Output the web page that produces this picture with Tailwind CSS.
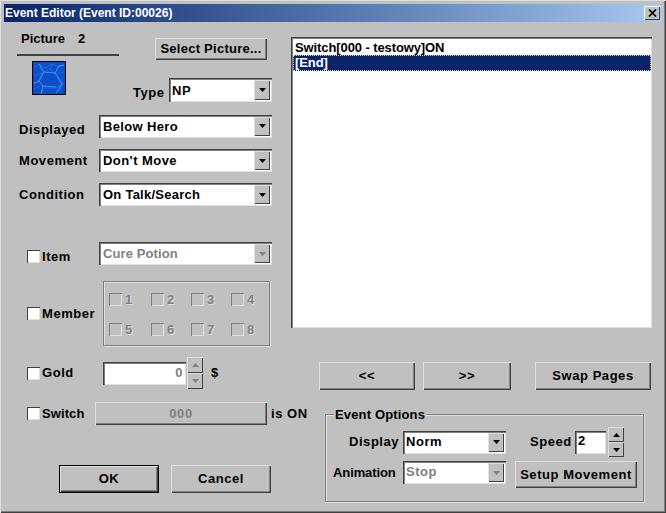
<!DOCTYPE html>
<html lang="en">
<head>
  <meta charset="UTF-8" />
  <title>Event Editor</title>
  <script src="https://cdn.jsdelivr.net/npm/@tailwindcss/browser@4"></script>
</head>
<body class="bg-[#c0c0c0]">
<div class="w-[666px] h-[513px] overflow-hidden flex flex-col px-[4px] pt-[4px] bg-[#c0c0c0] text-black font-['Liberation_Sans',sans-serif] font-bold text-[13px] leading-[16px] tracking-[0.55px] whitespace-nowrap shadow-[inset_1px_1px_0_#dfdfdf,inset_-1px_-1px_0_#404040,inset_-2px_-2px_0_#808080]">

  <!-- Title bar -->
  <div class="h-[18px] shrink-0 flex items-center justify-between pl-[1px] pr-[2px] bg-gradient-to-r from-[#0a246a] to-[#a6caf0] text-white text-[12px] tracking-normal">
    <span>Event Editor (Event ID:00026)</span>
    <div class="w-[16px] h-[14px] flex items-center justify-center bg-[#c0c0c0] shadow-[inset_1px_1px_0_#fff,inset_-1px_-1px_0_#404040]">
      <svg width="9" height="8" viewBox="0 0 9 8"><path d="M1 0.500L8 7.500M8 0.500L1 7.500" fill="none" stroke="#000" stroke-width="1.700"/></svg>
    </div>
  </div>

  <div class="flex flex-1">
    <!-- Left column -->
    <div class="w-[287px] shrink-0 flex flex-col">
      <div class="flex ml-[13px] w-[255px]">
        <div class="w-[102px] pt-[9px]">
          <div class="pl-[4px] h-[16px] tracking-normal">Picture<span class="ml-[13px]">2</span></div>
          <div class="h-[2px] mt-[7px] bg-[#404040]"></div>
          <svg class="ml-[15px] mt-[5px]" width="34" height="34" viewBox="0 0 34 34">
            <rect x="0.500" y="0.500" width="33" height="33" fill="#0a4fc8" stroke="#000"/>
            <path d="M2 6l6-3 5 4 8-4 6 3 5-2M8 3l2 9-8 3M10 12l8-4 6 5 8-2M24 13l7 9-4 9M18 8l3-5M10 12l-3 8-5 3M7 20l6 7 11 0 3 4M13 27l-3 5M24 27l7-5M2 28l6-3" fill="none" stroke="#1f6ae0" stroke-width="1"/>
            <path d="M7 3l5 8-5 9-5 2M12 11l11 1 4-7 5-1M23 12l7 11-6 9M7 20l4 5 13 1M11 25l-2 8" fill="none" stroke="#4590f0" stroke-width="1"/>
          </svg>
        </div>
        <div class="flex-1 flex flex-col items-end">
          <div class="mt-[16px] mr-[5px] w-[112px] h-[22px] flex items-center justify-center tracking-[0.25px] bg-[#c0c0c0] shadow-[inset_1px_1px_0_#dfdfdf,inset_-1px_-1px_0_#404040,inset_-2px_-2px_0_#808080]">Select Picture...</div>
          <div class="mt-[18px] w-[139px] flex items-center">
            <span class="w-[36px] mt-[5px]">Type</span>
            <div class="w-[103px] h-[24px] flex justify-between pl-[3px] pt-[2px] pr-[2px] pb-[2px] bg-white shadow-[inset_1px_1px_0_#404040,inset_2px_2px_0_#808080,inset_-1px_-1px_0_#dfdfdf]">
              <span class="mt-[3px]">NP</span>
              <div class="w-[16px] flex items-center justify-center bg-[#c0c0c0] shadow-[inset_1px_1px_0_#dfdfdf,inset_-1px_-1px_0_#404040]"><svg width="7" height="4" viewBox="0 0 7 4"><path d="M0 0h7L3.500 4z" fill="#000"/></svg></div>
            </div>
          </div>
        </div>
      </div>

      <div class="mt-[12px] ml-[15px] flex items-center">
        <span class="w-[80px] mt-[8px]">Displayed</span>
        <div class="w-[173px] h-[23px] flex justify-between pl-[4px] pt-[2px] pr-[2px] pb-[2px] bg-white shadow-[inset_1px_1px_0_#404040,inset_2px_2px_0_#808080,inset_-1px_-1px_0_#dfdfdf]">
          <span class="mt-[2px] tracking-[0.35px]">Below Hero</span>
          <div class="w-[16px] flex items-center justify-center bg-[#c0c0c0] shadow-[inset_1px_1px_0_#dfdfdf,inset_-1px_-1px_0_#404040]"><svg width="7" height="4" viewBox="0 0 7 4"><path d="M0 0h7L3.500 4z" fill="#000"/></svg></div>
        </div>
      </div>
      <div class="mt-[11px] ml-[15px] flex items-center">
        <span class="w-[80px]">Movement</span>
        <div class="w-[173px] h-[23px] flex justify-between pl-[4px] pt-[2px] pr-[2px] pb-[2px] bg-white shadow-[inset_1px_1px_0_#404040,inset_2px_2px_0_#808080,inset_-1px_-1px_0_#dfdfdf]">
          <span class="mt-[2px] tracking-[0.45px]">Don't Move</span>
          <div class="w-[16px] flex items-center justify-center bg-[#c0c0c0] shadow-[inset_1px_1px_0_#dfdfdf,inset_-1px_-1px_0_#404040]"><svg width="7" height="4" viewBox="0 0 7 4"><path d="M0 0h7L3.500 4z" fill="#000"/></svg></div>
        </div>
      </div>
      <div class="mt-[11px] ml-[15px] flex items-center">
        <span class="w-[80px]">Condition</span>
        <div class="w-[173px] h-[23px] flex justify-between pl-[4px] pt-[2px] pr-[2px] pb-[2px] bg-white shadow-[inset_1px_1px_0_#404040,inset_2px_2px_0_#808080,inset_-1px_-1px_0_#dfdfdf]">
          <span class="mt-[2px] tracking-[0.25px]">On Talk/Search</span>
          <div class="w-[16px] flex items-center justify-center bg-[#c0c0c0] shadow-[inset_1px_1px_0_#dfdfdf,inset_-1px_-1px_0_#404040]"><svg width="7" height="4" viewBox="0 0 7 4"><path d="M0 0h7L3.500 4z" fill="#000"/></svg></div>
        </div>
      </div>

      <!-- Item -->
      <div class="mt-[36px] ml-[23px] flex items-center">
        <div class="w-[13px] h-[13px] shrink-0 mt-[6px] bg-white shadow-[inset_1px_1px_0_#404040,inset_-1px_-1px_0_#dfdfdf]"></div>
        <span class="w-[57px] ml-[2px] mt-[7px]">Item</span>
        <div class="w-[173px] h-[23px] flex justify-between pl-[4px] pt-[2px] pr-[2px] pb-[2px] bg-white text-[#808080] shadow-[inset_1px_1px_0_#404040,inset_2px_2px_0_#808080,inset_-1px_-1px_0_#dfdfdf]">
          <span class="mt-[2px] tracking-[0.1px]">Cure Potion</span>
          <div class="w-[16px] flex items-center justify-center bg-[#c0c0c0] shadow-[inset_1px_1px_0_#dfdfdf,inset_-1px_-1px_0_#404040]"><svg width="7" height="4" viewBox="0 0 7 4"><path d="M0 0h7L3.500 4z" fill="#808080"/></svg></div>
        </div>
      </div>

      <!-- Member -->
      <div class="mt-[16px] ml-[23px] flex items-center">
        <div class="w-[13px] h-[13px] shrink-0 bg-white shadow-[inset_1px_1px_0_#404040,inset_-1px_-1px_0_#dfdfdf]"></div>
        <span class="w-[61px] ml-[2px]">Member</span>
        <div class="w-[167px] h-[65px] pl-[5px] pt-[11px] border border-[#808080] shadow-[inset_1px_1px_0_#dfdfdf,1px_1px_0_#dfdfdf] text-[#808080] [text-shadow:1px_1px_0_#dfdfdf] grid grid-cols-[42px_40px_40px_40px] grid-rows-[30px_14px]">
          <div class="flex items-start"><div class="w-[13px] h-[13px] shadow-[inset_1px_1px_0_#808080,inset_-1px_-1px_0_#dfdfdf]"></div><span class="ml-[3px] leading-[14px]">1</span></div>
          <div class="flex items-start"><div class="w-[13px] h-[13px] shadow-[inset_1px_1px_0_#808080,inset_-1px_-1px_0_#dfdfdf]"></div><span class="ml-[3px] leading-[14px]">2</span></div>
          <div class="flex items-start"><div class="w-[13px] h-[13px] shadow-[inset_1px_1px_0_#808080,inset_-1px_-1px_0_#dfdfdf]"></div><span class="ml-[3px] leading-[14px]">3</span></div>
          <div class="flex items-start"><div class="w-[13px] h-[13px] shadow-[inset_1px_1px_0_#808080,inset_-1px_-1px_0_#dfdfdf]"></div><span class="ml-[3px] leading-[14px]">4</span></div>
          <div class="flex items-start"><div class="w-[13px] h-[13px] shadow-[inset_1px_1px_0_#808080,inset_-1px_-1px_0_#dfdfdf]"></div><span class="ml-[3px] leading-[14px]">5</span></div>
          <div class="flex items-start"><div class="w-[13px] h-[13px] shadow-[inset_1px_1px_0_#808080,inset_-1px_-1px_0_#dfdfdf]"></div><span class="ml-[3px] leading-[14px]">6</span></div>
          <div class="flex items-start"><div class="w-[13px] h-[13px] shadow-[inset_1px_1px_0_#808080,inset_-1px_-1px_0_#dfdfdf]"></div><span class="ml-[3px] leading-[14px]">7</span></div>
          <div class="flex items-start"><div class="w-[13px] h-[13px] shadow-[inset_1px_1px_0_#808080,inset_-1px_-1px_0_#dfdfdf]"></div><span class="ml-[3px] leading-[14px]">8</span></div>
        </div>
      </div>

      <!-- Gold -->
      <div class="mt-[11px] ml-[23px] flex items-center h-[32px]">
        <div class="w-[13px] h-[13px] shrink-0 bg-white shadow-[inset_1px_1px_0_#404040,inset_-1px_-1px_0_#dfdfdf]"></div>
        <span class="w-[61px] ml-[2px]">Gold</span>
        <div class="w-[83px] h-[23px] pr-[3px] text-right leading-[22px] bg-white text-[#808080] shadow-[inset_1px_1px_0_#404040,inset_2px_2px_0_#808080,inset_-1px_-1px_0_#dfdfdf]">0</div>
        <div class="ml-[1px] w-[16px] h-[32px] flex flex-col">
          <div class="h-[16px] flex items-center justify-center bg-[#c0c0c0] shadow-[inset_1px_1px_0_#dfdfdf,inset_-1px_-1px_0_#404040]"><svg width="7" height="4" viewBox="0 0 7 4"><path d="M0 4h7L3.500 0z" fill="#808080"/></svg></div>
          <div class="h-[16px] flex items-center justify-center bg-[#c0c0c0] shadow-[inset_1px_1px_0_#dfdfdf,inset_-1px_-1px_0_#404040]"><svg width="7" height="4" viewBox="0 0 7 4"><path d="M0 0h7L3.500 4z" fill="#808080"/></svg></div>
        </div>
        <span class="ml-[8px]">$</span>
      </div>

      <!-- Switch -->
      <div class="mt-[13px] ml-[23px] w-[300px] flex items-center">
        <div class="w-[13px] h-[13px] shrink-0 bg-white shadow-[inset_1px_1px_0_#404040,inset_-1px_-1px_0_#dfdfdf]"></div>
        <span class="w-[53px] shrink-0 ml-[2px] tracking-[0.1px]">Switch</span>
        <div class="w-[172px] h-[23px] shrink-0 flex items-center justify-center text-[#808080] shadow-[inset_1px_1px_0_#dfdfdf,inset_-1px_-1px_0_#404040,inset_-2px_-2px_0_#808080]">000</div>
        <span class="ml-[4px] shrink-0">is ON</span>
      </div>

      <!-- OK / Cancel -->
      <div class="mt-[40px] ml-[55px] flex gap-[12px]">
        <div class="w-[100px] h-[28px] flex items-center justify-center border border-black shadow-[inset_1px_1px_0_#dfdfdf,inset_-1px_-1px_0_#404040,inset_-2px_-2px_0_#808080]">OK</div>
        <div class="w-[100px] h-[28px] flex items-center justify-center shadow-[inset_1px_1px_0_#dfdfdf,inset_-1px_-1px_0_#404040,inset_-2px_-2px_0_#808080]">Cancel</div>
      </div>
    </div>

    <!-- Right column -->
    <div class="flex-1 flex flex-col">
      <!-- Command list -->
      <div class="mt-[15px] w-[361px] h-[291px] pt-[3px] pl-[2px] pr-[1px] bg-white tracking-[-0.1px] shadow-[inset_1px_1px_0_#404040,inset_2px_2px_0_#808080,inset_-1px_-1px_0_#dfdfdf]">
        <div class="h-[15px] pl-[2px] leading-[15px]">Switch[000 - testowy]ON</div>
        <div class="h-[16px] pl-[1px] leading-[14px] bg-[#0a246a] text-white border border-dotted border-[#e8d48a]">[End]</div>
      </div>

      <!-- Page buttons -->
      <div class="mt-[34px] ml-[28px] flex">
        <div class="w-[96px] h-[28px] flex items-center justify-center shadow-[inset_1px_1px_0_#dfdfdf,inset_-1px_-1px_0_#404040,inset_-2px_-2px_0_#808080]">&lt;&lt;</div>
        <div class="ml-[8px] w-[88px] h-[28px] flex items-center justify-center shadow-[inset_1px_1px_0_#dfdfdf,inset_-1px_-1px_0_#404040,inset_-2px_-2px_0_#808080]">&gt;&gt;</div>
        <div class="ml-[24px] w-[116px] h-[28px] flex items-center justify-center shadow-[inset_1px_1px_0_#dfdfdf,inset_-1px_-1px_0_#404040,inset_-2px_-2px_0_#808080]">Swap Pages</div>
      </div>

      <!-- Event Options -->
      <div class="relative mt-[24px] ml-[34px] w-[319px] h-[88px] border border-[#808080] shadow-[inset_1px_1px_0_#dfdfdf,1px_1px_0_#dfdfdf]">
        <span class="absolute left-[8px] top-[-8px] px-[1px] bg-[#c0c0c0] tracking-[0.15px]">Event Options</span>
        <div class="mt-[12px] ml-[23px] flex items-center h-[30px]">
          <span class="w-[54px]">Display</span>
          <div class="w-[103px] h-[23px] flex justify-between pl-[3px] pt-[2px] pr-[2px] pb-[2px] bg-white shadow-[inset_1px_1px_0_#404040,inset_2px_2px_0_#808080,inset_-1px_-1px_0_#dfdfdf]">
            <span class="mt-[1px]">Norm</span>
            <div class="w-[16px] flex items-center justify-center bg-[#c0c0c0] shadow-[inset_1px_1px_0_#dfdfdf,inset_-1px_-1px_0_#404040]"><svg width="7" height="4" viewBox="0 0 7 4"><path d="M0 0h7L3.500 4z" fill="#000"/></svg></div>
          </div>
          <span class="ml-[24px] w-[45px]">Speed</span>
          <div class="w-[31px] h-[23px] pl-[3px] leading-[20px] bg-white shadow-[inset_1px_1px_0_#404040,inset_2px_2px_0_#808080,inset_-1px_-1px_0_#dfdfdf]">2</div>
          <div class="ml-[2px] w-[16px] h-[30px] flex flex-col">
            <div class="h-[15px] flex items-center justify-center bg-[#c0c0c0] shadow-[inset_1px_1px_0_#dfdfdf,inset_-1px_-1px_0_#404040]"><svg width="7" height="4" viewBox="0 0 7 4"><path d="M0 4h7L3.500 0z" fill="#000"/></svg></div>
            <div class="h-[15px] flex items-center justify-center bg-[#c0c0c0] shadow-[inset_1px_1px_0_#dfdfdf,inset_-1px_-1px_0_#404040]"><svg width="7" height="4" viewBox="0 0 7 4"><path d="M0 0h7L3.500 4z" fill="#000"/></svg></div>
          </div>
        </div>
        <div class="mt-[4px] ml-[7px] flex items-start">
          <span class="w-[70px] mt-[4px] tracking-[-0.1px]">Animation</span>
          <div class="w-[103px] h-[23px] flex justify-between pl-[3px] pt-[2px] pr-[2px] pb-[2px] bg-white text-[#808080] shadow-[inset_1px_1px_0_#404040,inset_2px_2px_0_#808080,inset_-1px_-1px_0_#dfdfdf]">
            <span class="mt-[1px]">Stop</span>
            <div class="w-[16px] flex items-center justify-center bg-[#c0c0c0] shadow-[inset_1px_1px_0_#dfdfdf,inset_-1px_-1px_0_#404040]"><svg width="7" height="4" viewBox="0 0 7 4"><path d="M0 0h7L3.500 4z" fill="#808080"/></svg></div>
          </div>
          <div class="ml-[9px] w-[122px] h-[27px] flex items-center justify-center shadow-[inset_1px_1px_0_#dfdfdf,inset_-1px_-1px_0_#404040,inset_-2px_-2px_0_#808080]">Setup Movement</div>
        </div>
      </div>
    </div>
  </div>
</div>
</body>
</html>
